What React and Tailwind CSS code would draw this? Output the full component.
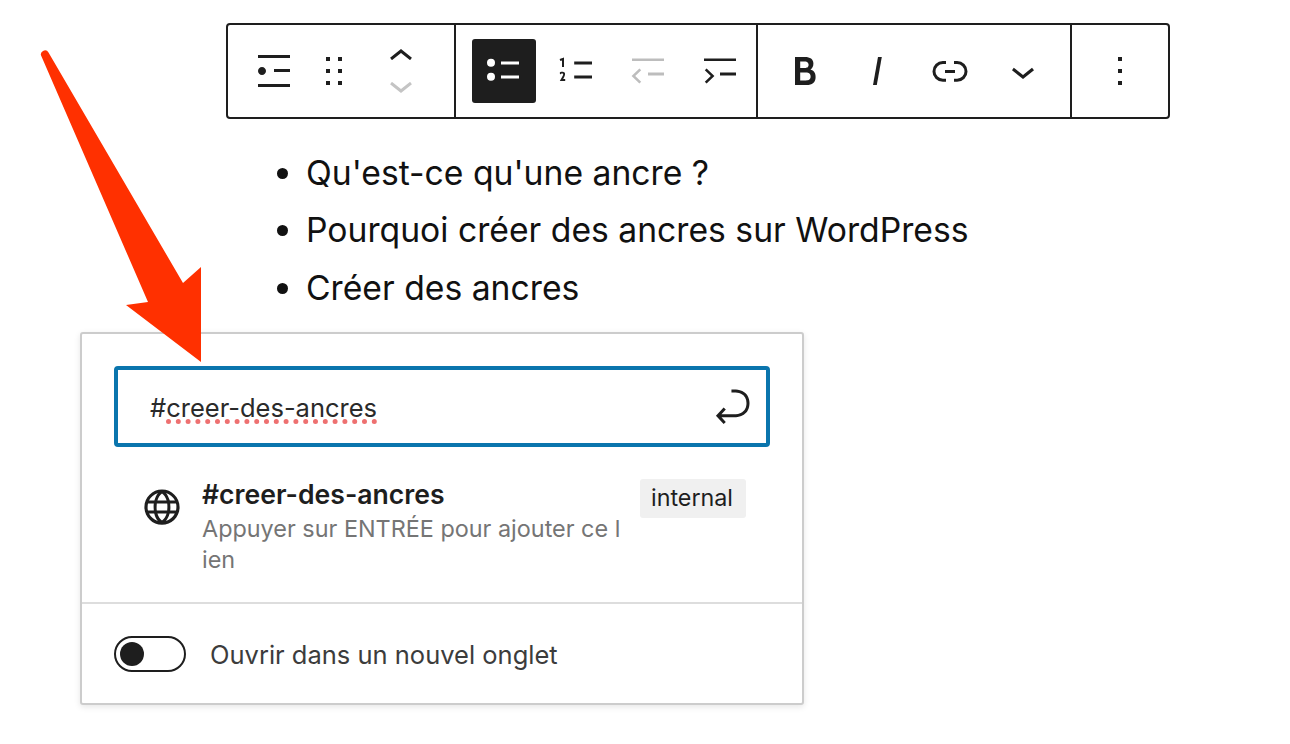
import React from 'react';

const Icon = ({ d, className = 'fill-[#1e1e1e]' }) => (
  <svg viewBox="0 0 24 24" className={`w-12 h-12 ${className}`}>
    <path d={d} />
  </svg>
);

const paths = {
  list: 'M4 4v1.5h16V4H4zm8 8.5h8V11h-8v1.5zM4 20h16v-1.5H4V20zm4-8c0-1.1-.9-2-2-2s-2 .9-2 2 .9 2 2 2 2-.9 2-2z',
  drag: 'M8 7h2V5H8v2zm0 6h2v-2H8v2zm0 6h2v-2H8v2zm6-14v2h2V5h-2zm0 8h2v-2h-2v2zm0 6h2v-2h-2v2z',
  bullets: 'M10.5 8.7H19.5V7.2H10.5zM10.5 15.7H19.5V14.2H10.5zM5.5 5.9a2 2 0 1 0 0 4 2 2 0 1 0 0-4zM5.5 12.9a2 2 0 1 0 0 4 2 2 0 1 0 0-4z',
  numbers: 'M11.1 15.8H20v-1.5h-8.9v1.5zm0-8.6v1.5H20V7.2h-8.9zM5 6.7V10h1V5.3L3.8 6l.4 1 .8-.3zm-.4 5.7c-.3.1-.5.2-.7.3l.1 1.1c.2-.2.5-.4.8-.5.3-.1.6 0 .7.1.2.3 0 .8-.2 1.1-.5.8-.9 1.6-1.4 2.5h2.7v-1h-1c.3-.6.8-1.4.9-2.1.1-.3 0-.8-.2-1.1-.5-.6-1.3-.5-1.7-.4z',
  outdent: 'M20 7H4V5.7h16V7zM20 14.2h-8v-1.4h8v1.4zM8.6 11.6l-3 2.9 3 2.9-.9.9-3.9-3.8 3.9-3.8.9.9z',
  indent: 'M20 7H4V5.7h16V7zM20 14.2h-8v-1.4h8v1.4zM4.4 11.6l3 2.9-3 2.9.9.9 3.9-3.8-3.9-3.8-.9.9z',
  bold: 'M14.7 11.3c1-.6 1.5-1.6 1.5-3 0-2.3-1.7-3.3-4.2-3.3H7v14h5.8c1.4 0 2.5-.3 3.3-1 .8-.7 1.2-1.7 1.2-2.9.1-1.9-.8-3.3-2.6-3.8zm-5.1-4h2.3c.6 0 1.1.1 1.4.4.3.3.5.7.5 1.2s-.2 1-.5 1.2c-.3.3-.8.4-1.4.4H9.6V7.3zm4.6 9c-.4.3-1 .4-1.7.4H9.6v-3.9h2.9c.7 0 1.3.2 1.7.5.4.3.6.8.6 1.5s-.2 1.2-.6 1.5z',
  italic: 'M12.5 5L10 19h1.9l2.5-14z',
  link: 'M10 17.389H8.444A5.194 5.194 0 1 1 8.444 7H10v1.5H8.444a3.694 3.694 0 0 0 0 7.389H10v1.5ZM14 7h1.556a5.194 5.194 0 0 1 0 10.39H14v-1.5h1.556a3.694 3.694 0 0 0 0-7.39H14V7Zm-4.5 6h5v-1.5h-5V13Z',
  chevron: 'M17.5 11.6L12 16l-5.5-4.4.9-1.2L12 14l4.5-3.6 1 1.2z',
  more: 'M13 19h-2v-2h2v2zm0-6h-2v-2h2v2zm0-6h-2V5h2v2z',
  globe: 'M12 3.3c-4.8 0-8.8 3.9-8.8 8.8 0 4.8 3.9 8.8 8.8 8.8 4.8 0 8.8-3.9 8.8-8.8s-4-8.8-8.8-8.8zm6.5 5.5h-2.6C15.4 7.3 14.8 6 14 5c2 .6 3.6 2 4.5 3.8zm.7 3.2c0 .6-.1 1.2-.2 1.8h-2.9c.1-.6.1-1.2.1-1.8s-.1-1.2-.1-1.8H19c.2.6.2 1.2.2 1.8zM12 18.7c-1-.7-1.8-1.9-2.3-3.5h4.6c-.5 1.6-1.3 2.9-2.3 3.5zm-2.6-4.9c-.1-.6-.1-1.1-.1-1.8 0-.6.1-1.2.1-1.8h5.2c.1.6.1 1.1.1 1.8s-.1 1.2-.1 1.8H9.4zM4.8 12c0-.6.1-1.2.2-1.8h2.9c-.1.6-.1 1.2-.1 1.8 0 .6.1 1.2.1 1.8H5c-.2-.6-.2-1.2-.2-1.8zM12 5.3c1 .7 1.8 1.9 2.3 3.5H9.7c.5-1.6 1.3-2.9 2.3-3.5zM10 5c-.8 1-1.4 2.3-1.8 3.8H5.5C6.4 7 8 5.6 10 5zM5.5 15.3h2.6c.4 1.5 1 2.8 1.8 3.7-1.9-.6-3.5-2-4.4-3.7zM14 19c.8-1 1.4-2.2 1.8-3.7h2.6C17.6 17 16 18.4 14 19z',
  enter: 'M6.734 16.106l2.176-2.38-1.093-1.028-3.846 4.158 3.846 4.157 1.093-1.027-2.176-2.38h2.811c1.125 0 2.25.03 3.374 0 1.428-.001 3.362-.25 4.963-1.277 1.66-1.065 2.868-2.906 2.868-5.859 0-2.479-1.327-4.896-3.65-5.93-1.82-.813-3.044-.8-4.806-.788l-.567.002v1.5c.184 0 .368 0 .553-.002 1.82-.007 2.704-.014 4.21.657 1.854.827 2.76 2.657 2.76 4.561 0 2.472-.973 3.824-2.178 4.596-1.258.807-2.864 1.04-4.163 1.04h-.02c-1.115.03-2.229 0-3.344 0H6.734z',
};

const Cell = ({ children }) => (
  <div className="w-[72px] h-16 flex items-center justify-center">{children}</div>
);

const Toolbar = () => (
  <div className="ml-[226px] w-[944px] h-24 border-2 border-[#1e1e1e] rounded-[4px] flex items-center bg-white">
    <div className="w-[228px] h-full shrink-0 border-r-2 border-[#1e1e1e] flex items-center pl-4">
      <div className="w-[60px] flex justify-center"><Icon d={paths.list} /></div>
      <div className="w-[60px] flex justify-center"><Icon d={paths.drag} /></div>
      <div className="ml-[15px] w-[44px] flex flex-col items-center gap-[22px]">
        <svg viewBox="0 0 24 12" className="w-6 h-3 fill-none stroke-[#1e1e1e] stroke-[3]"><path d="M2 11l10-8 10 8" /></svg>
        <svg viewBox="0 0 24 12" className="w-6 h-3 fill-none stroke-[#c4c4c4] stroke-[3]"><path d="M2 1l10 8 10-8" /></svg>
      </div>
    </div>
    <div className="w-[302px] h-full shrink-0 border-r-2 border-[#1e1e1e] flex items-center pl-3">
      <Cell>
        <div className="w-16 h-16 rounded-[3px] bg-[#1e1e1e] flex items-center justify-center">
          <Icon d={paths.bullets} className="fill-white" />
        </div>
      </Cell>
      <Cell><Icon d={paths.numbers} /></Cell>
      <Cell><Icon d={paths.outdent} className="fill-[#bdbdbd]" /></Cell>
      <Cell><Icon d={paths.indent} /></Cell>
    </div>
    <div className="w-[314px] h-full shrink-0 border-r-2 border-[#1e1e1e] flex items-center pl-[11px]">
      <Cell><Icon d={paths.bold} /></Cell>
      <Cell><Icon d={paths.italic} /></Cell>
      <div className="ml-[1px]"><Cell><Icon d={paths.link} /></Cell></div>
      <div className="ml-[1px]"><Cell><Icon d={paths.chevron} /></Cell></div>
    </div>
    <div className="flex-1 flex justify-center"><Icon d={paths.more} /></div>
  </div>
);

const items = ["Qu'est-ce qu'une ancre ?", 'Pourquoi créer des ancres sur WordPress', 'Créer des ancres'];

export default function App() {
  return (
    <div className="relative w-[1290px] h-[744px] overflow-hidden bg-white pt-[23px] font-['Inter',sans-serif] text-[#1e1e1e]">
      <Toolbar />

      <ul className="mt-[24.6px] ml-[226px] pl-20 list-disc text-[33.7px] leading-[57.6px] text-[#111]">
        {items.map(t => <li key={t}>{t}</li>)}
      </ul>

      <div className="mt-[15.6px] ml-20 w-[724px] h-[373px] border-2 border-[#ccc] rounded-[3px] bg-white shadow-[0_2px_6px_rgba(0,0,0,0.1)]">
        <div className="mt-8 ml-8 w-[656px] h-[81px] border-4 border-[#0a75ad] rounded-[4px] flex items-center justify-between pl-8 pr-2.5">
          <span className="mt-[3px] text-[25.5px] text-[#2a2a2a]">#<span className="underline decoration-dotted decoration-[5px] decoration-[#ee7070] underline-offset-[2px]">creer-des-ancres</span></span>
          <Icon d={paths.enter} />
        </div>

        <div className="h-[155px] flex pl-[56px] pt-[34px]">
          <div className="mt-[2px]"><Icon d={paths.globe} /></div>
          <div className="ml-4 w-[438px]">
            <div className="text-[26.6px] leading-[26px] font-semibold text-[#1e1e1e]">#creer-des-ancres</div>
            <div className="mt-[6px] text-[23.4px] leading-[31px] text-[#757575]">Appuyer sur ENTRÉE pour ajouter ce l<br />ien</div>
          </div>
          <div className="-mt-[2px] h-[39px] pl-[11px] pr-[13px] rounded-[3px] bg-[#f0f0f0] flex items-center text-[23.3px] text-[#1e1e1e]">internal</div>
        </div>

        <div className="h-[101px] border-t-2 border-[#ddd] flex items-center pl-8 pt-[1px]">
          <div className="w-[72px] h-9 rounded-full border-2 border-[#1e1e1e] flex items-center pl-1">
            <div className="w-6 h-6 rounded-full bg-[#1e1e1e]" />
          </div>
          <span className="ml-6 mt-[2px] text-[25.5px] text-[#3c3c3c]">Ouvrir dans un nouvel onglet</span>
        </div>
      </div>

      <svg viewBox="0 0 1290 744" className="absolute inset-0 w-[1290px] h-[744px] pointer-events-none">
        <path d="M41.5 56.5a4 4 0 0 1 7-4L183 283l18-16v95l-75-57 22-3z" fill="#ff3000" />
      </svg>
    </div>
  );
}
